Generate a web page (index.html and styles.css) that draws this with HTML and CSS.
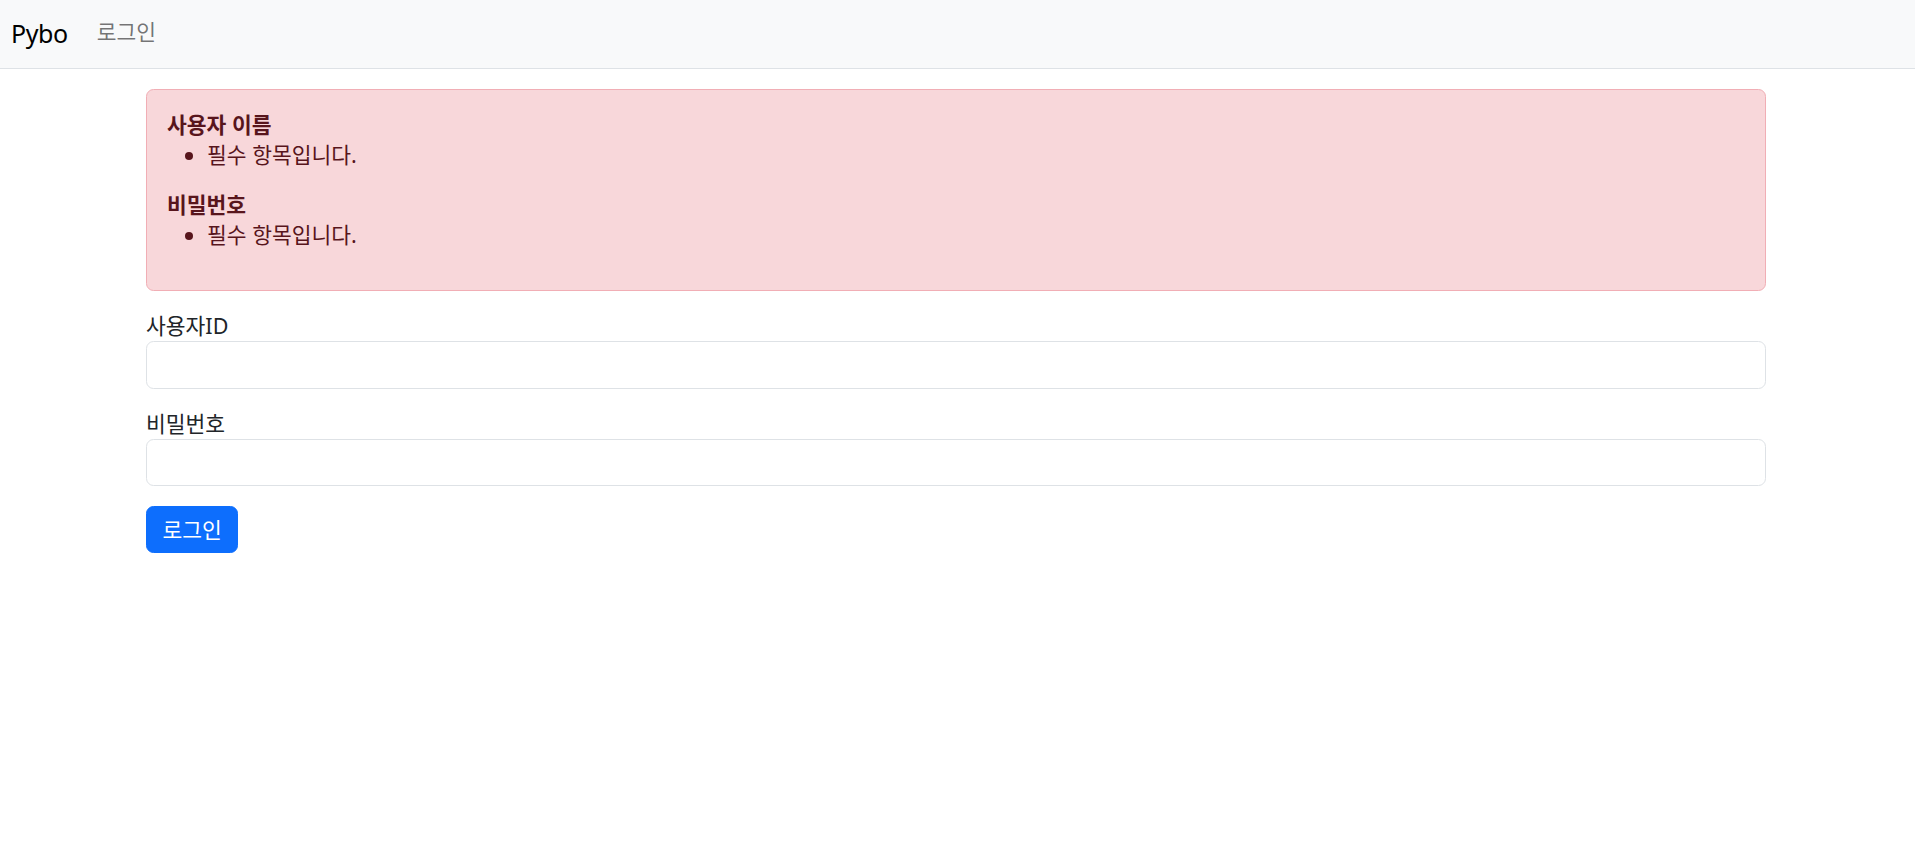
FILE: index.html
```html
<!DOCTYPE html>
<html lang="ko">
<head>
<meta charset="utf-8">
<title>Pybo</title>
<link rel="stylesheet" href="styles.css">
</head>
<body>
<nav class="navbar">
  <a class="navbar-brand" href="#">Pybo</a>
  <ul class="navbar-nav">
    <li><a class="nav-link" href="#">로그인</a></li>
  </ul>
</nav>
<div class="container">
  <form class="login-form">
    <div class="alert alert-danger">
      <strong>사용자 이름</strong>
      <ul>
        <li>필수 항목입니다.</li>
      </ul>
      <strong>비밀번호</strong>
      <ul>
        <li>필수 항목입니다.</li>
      </ul>
    </div>
    <div class="field">
      <label for="username">사용자ID</label>
      <input type="text" class="form-control" id="username">
    </div>
    <div class="field">
      <label for="password">비밀번호</label>
      <input type="password" class="form-control" id="password">
    </div>
    <button type="submit" class="btn btn-primary">로그인</button>
  </form>
</div>
</body>
</html>
```
FILE: styles.css
```css
* { box-sizing: border-box; }
html, body {
  margin: 0;
  padding: 0;
}
body {
  font-family: "Noto Sans", "Noto Sans CJK KR", sans-serif;
  font-size: 21.5px;
  line-height: 30px;
  color: #212529;
  background: #fff;
}
a { text-decoration: none; }

.navbar {
  display: flex;
  align-items: center;
  height: 69px;
  padding: 0 11px;
  background: #f8f9fa;
  border-bottom: 1px solid #dee2e6;
}
.navbar-brand {
  font-size: 25px;
  line-height: 37px;
  letter-spacing: -0.4px;
  color: #000;
  margin-right: 19px;
  padding-bottom: 2px;
}
.navbar-nav {
  list-style: none;
  margin: 0;
  padding: 0;
  display: flex;
}
.nav-link {
  display: block;
  padding: 0 10px 4px;
  color: rgba(0, 0, 0, 0.55);
}

.container {
  max-width: 1650px;
  margin: 20px auto;
  padding: 0 16.5px 0 13.5px;
}

.alert {
  padding: 20px;
  margin-bottom: 20px;
  border: 1px solid #f1aeb5;
  border-radius: 7.5px;
}
.alert-danger {
  background: #f8d7da;
  color: #58151c;
}
.alert strong {
  font-weight: 700;
  display: inline;
}
.alert ul {
  margin: 0 0 20px;
  padding-left: 40px;
}

.field {
  margin-bottom: 20px;
}
.field label {
  display: inline-block;
}
.form-control {
  display: block;
  width: 100%;
  height: 47.5px;
  padding: 7.5px 15px;
  font: inherit;
  color: #212529;
  background: #fff;
  border: 1px solid #dee2e6;
  border-radius: 7.5px;
  outline: none;
}

.btn {
  display: inline-block;
  font: inherit;
  line-height: 30px;
  padding: 7.5px 15.5px;
  border: 1px solid transparent;
  border-radius: 7.5px;
  cursor: pointer;
}
.btn-primary {
  color: #fff;
  background: #0d6efd;
  border-color: #0d6efd;
}
```
